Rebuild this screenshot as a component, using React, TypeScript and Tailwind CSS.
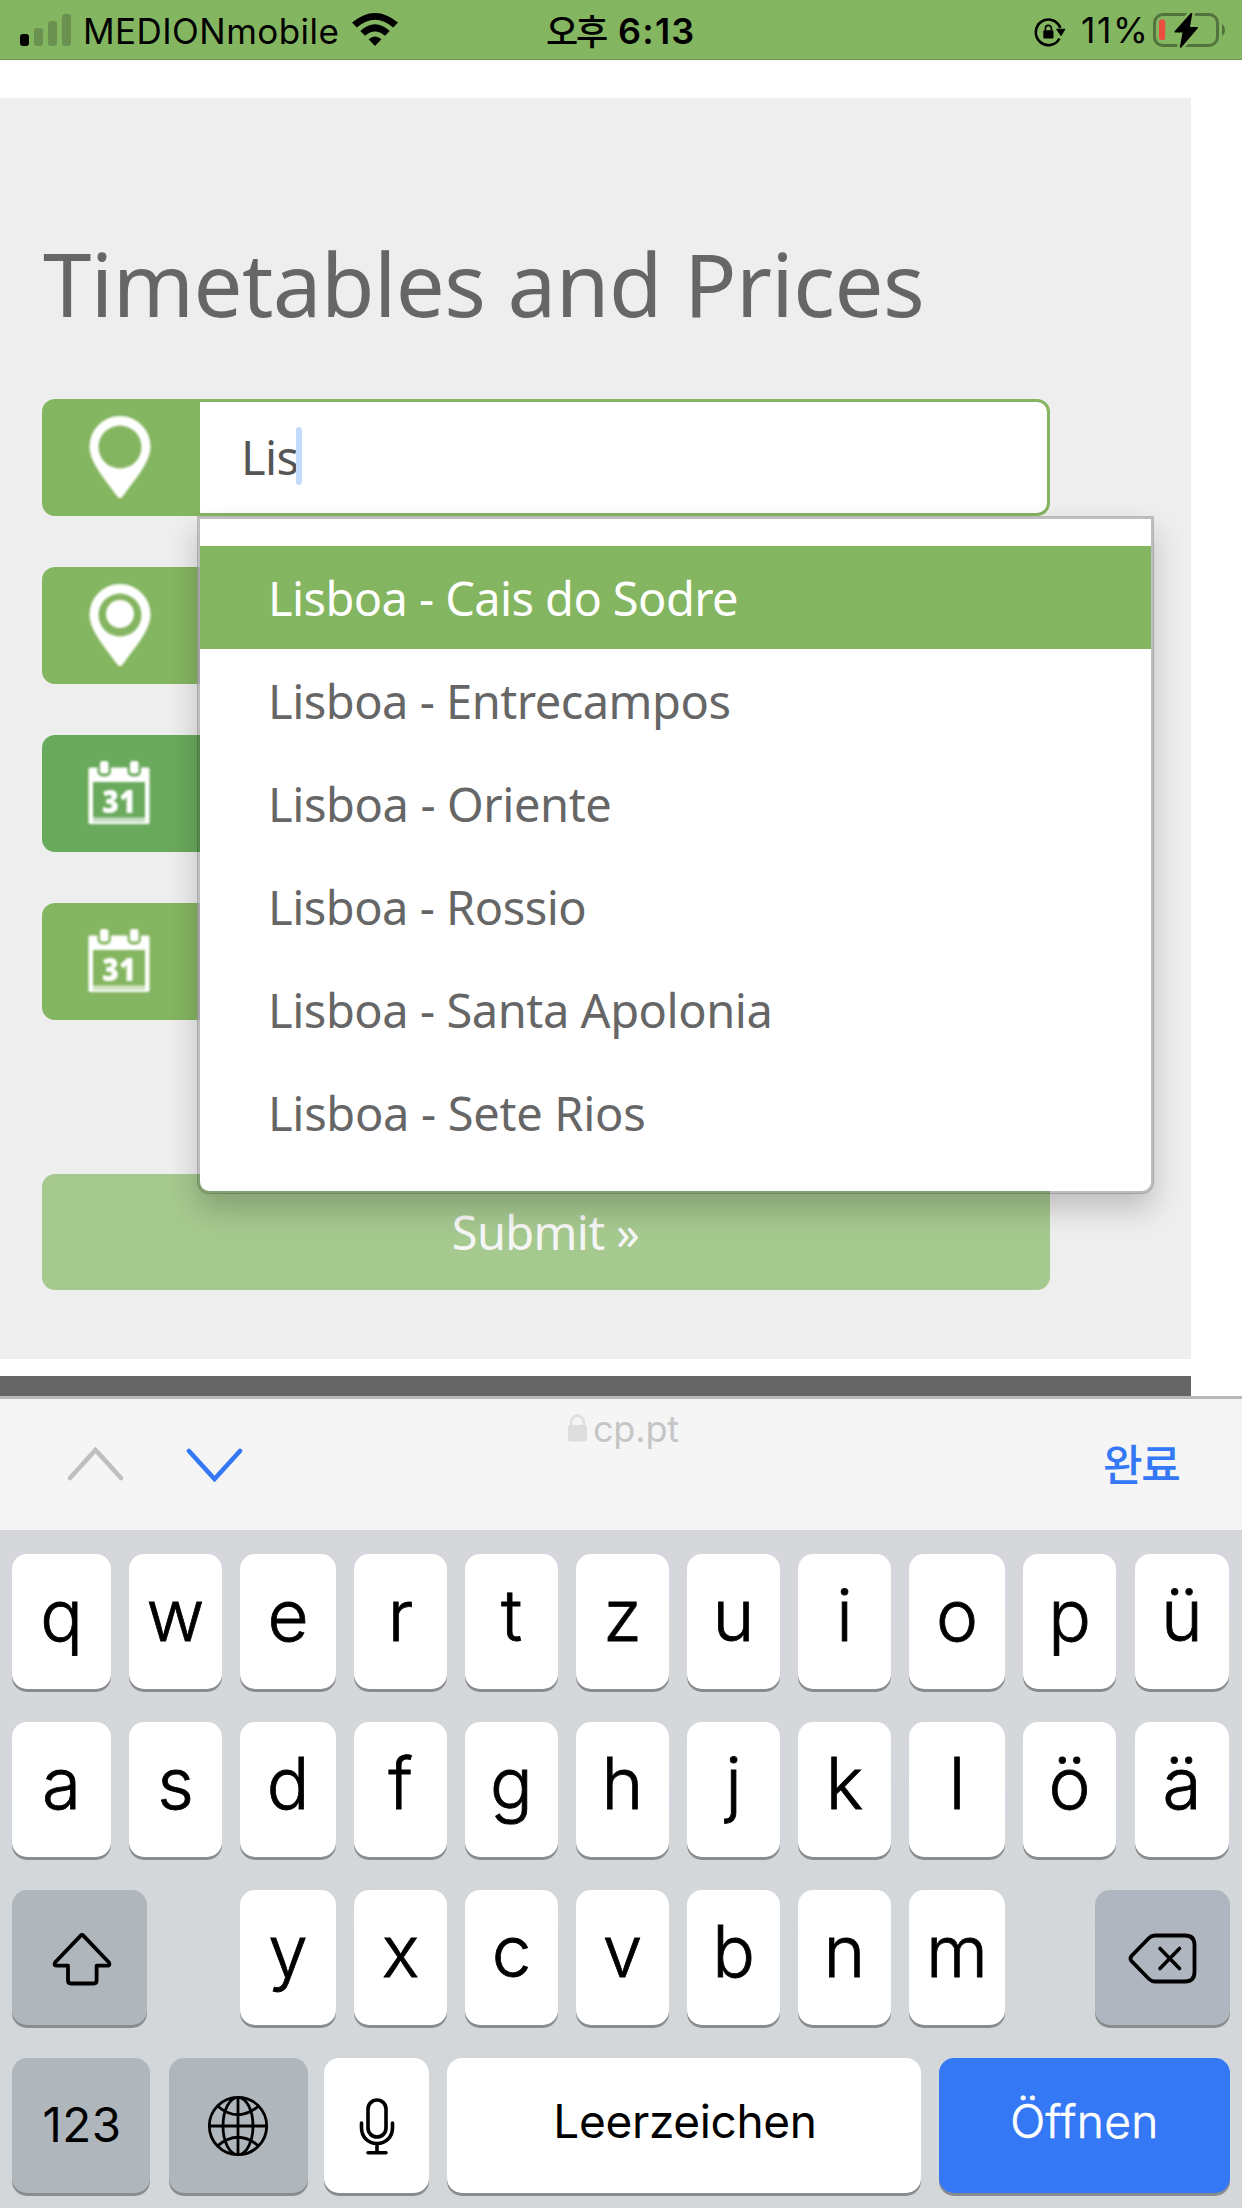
import type { ReactNode } from "react";

const STATIONS = [
  "Lisboa - Cais do Sodre",
  "Lisboa - Entrecampos",
  "Lisboa - Oriente",
  "Lisboa - Rossio",
  "Lisboa - Santa Apolonia",
  "Lisboa - Sete Rios",
];
const STATION_TRACKING = [
  "tracking-[-0.6px]",
  "tracking-[-0.5px]",
  "tracking-[-0.4px]",
  "tracking-[-0.5px]",
  "tracking-[-0.45px]",
  "tracking-[-0.3px]",
];

const WIDE = ["w-[99px]", "w-[93px]", "w-[96px]", "w-[93px]", "w-[93px]", "w-[93px]", "w-[93px]", "w-[93px]", "w-[96px]", "w-[93px]", "ml-px w-[94px]"];
const ROW_ONE = ["q", "w", "e", "r", "t", "z", "u", "i", "o", "p", "ü"];
const ROW_TWO = ["a", "s", "d", "f", "g", "h", "j", "k", "l", "ö", "ä"];
const ROW_THREE = ["y", "x", "c", "v", "b", "n", "m"];

function Key({ className, children }: { className: string; children: ReactNode }) {
  return (
    <div className={`flex h-[135px] shrink-0 items-center justify-center rounded-[15px] shadow-[0_3px_0_#898c8e] ${className}`}>
      {children}
    </div>
  );
}

function Letter({ char, width }: { char: string; width: string }) {
  return (
    <Key className={`bg-white pb-[12px] text-[71px] leading-none font-light [-webkit-text-stroke:0.8px_#000] ${width}`}>{char}</Key>
  );
}

function SignalBars() {
  return (
    <svg width="52" height="32" viewBox="0 0 52 32" className="shrink-0">
      <rect x="0" y="20" width="9" height="12" rx="3" fill="#000" />
      <rect x="14" y="14" width="9" height="18" rx="3" fill="#6a9150" />
      <rect x="28" y="7" width="9" height="25" rx="3" fill="#6a9150" />
      <rect x="42" y="0" width="9" height="32" rx="3" fill="#6a9150" />
    </svg>
  );
}

function Wifi() {
  return (
    <svg width="46" height="33" viewBox="0 0 46 33" className="shrink-0">
      <path d="M23 33 L16.6 26.2 Q23 20.6 29.4 26.2 Z" />
      <path d="M8.3 18 Q23 4.6 37.7 18 L33 22.8 Q23 14 13 22.8 Z" />
      <path d="M0 9.6 Q23 -9.6 46 9.6 L41.2 14.5 Q23 -0.9 4.8 14.5 Z" />
    </svg>
  );
}

function RotationLock() {
  return (
    <svg width="32" height="30" viewBox="0 0 32 30" className="shrink-0">
      <path d="M26.3 11 A12.6 12.8 0 1 0 25.5 21.5" fill="none" stroke="#000" strokeWidth="2.6" />
      <path d="M22.5 12.2 H31 L27 18.8 Z" stroke="#000" strokeWidth="0.8" strokeLinejoin="round" />
      <rect x="9.3" y="13.3" width="10.2" height="8.2" rx="1.2" />
      <path d="M11.4 13.5 V11.5 a3 3.2 0 0 1 6 0 V13.5" fill="none" stroke="#000" strokeWidth="1.7" />
    </svg>
  );
}

function Battery() {
  return (
    <svg width="74" height="36" viewBox="0 0 74 36" className="shrink-0">
      <rect x="1.5" y="1.5" width="63" height="31" rx="8.5" fill="none" stroke="#52733c" strokeWidth="3" />
      <path d="M69 11 a7.5 7.5 0 0 1 0 12 Z" fill="#52733c" />
      <rect x="6" y="6.5" width="6.2" height="20.5" rx="2.600" fill="#eb4e3d" />
      <path
        d="M38.500 0.500 L22.200 18.800 H30.500 L27.700 34 L44.200 14.800 H36 Z"
        fill="#000"
        stroke="#84b560"
        strokeWidth="7"
        paintOrder="stroke"
        strokeLinejoin="round"
      />
      <path d="M38.500 0.500 L22.200 18.800 H30.500 L27.700 34 L44.200 14.800 H36 Z" fill="#000" stroke="#000" strokeWidth="1.6" strokeLinejoin="round" />
    </svg>
  );
}

function Pin({ dot = false }: { dot?: boolean }) {
  return (
    <svg width="62" height="83" viewBox="0 0 62 83" className="blur-[0.8px]">
      <path
        fillRule="evenodd"
        fill="#fff"
        d="M31 0 A30.5 30.5 0 0 1 61.5 30.5 C61.5 46 47 62 34 80 Q31 84.500 28 80 C15 62 0.5 46 0.5 30.5 A30.5 30.5 0 0 1 31 0 Z M31 9.500 A21.500 21.500 0 1 0 31 52.500 A21.500 21.500 0 1 0 31 9.500 Z"
      />
      {dot && <circle cx="31" cy="30" r="14" fill="#fff" />}
    </svg>
  );
}

function CalendarIcon({ fill }: { fill: string }) {
  return (
    <svg width="62" height="66" viewBox="0 0 62 66" className="mr-[2px] mb-[2px] blur-[1px]">
      <rect x="0.5" y="7.5" width="61" height="56.500" rx="1.5" fill="#fff" />
      <rect x="9.500" y="0" width="13.500" height="16.500" rx="5" fill={fill} />
      <rect x="39.500" y="0" width="13.500" height="16.500" rx="5" fill={fill} />
      <rect x="12" y="1" width="8.500" height="12.500" rx="2.500" fill="#fff" />
      <rect x="42" y="1" width="8.500" height="12.500" rx="2.500" fill="#fff" />
      <rect x="5" y="22" width="52" height="35.500" fill={fill} />
      <rect x="5" y="57.500" width="52" height="4.500" fill={fill} opacity="0.4" />
      <text x="31" y="52.500" textAnchor="middle" fontFamily="Open Sans, sans-serif" fontSize="32" fontWeight="800" textLength="34" lengthAdjust="spacingAndGlyphs" fill="#fff">
        31
      </text>
    </svg>
  );
}

function FormRow({ icon, className, border }: { icon: ReactNode; className: string; border: string }) {
  return (
    <div className="flex h-[117px]">
      <div className={`flex w-[155px] shrink-0 items-center justify-center rounded-l-[13px] ${className}`}>{icon}</div>
      <div className={`flex-1 rounded-r-[13px] border-[3px] bg-white ${border}`} />
    </div>
  );
}

export default function App() {
  return (
    <div className="flex h-[2208px] w-[1242px] flex-col overflow-hidden bg-white font-['Inter','Noto_Sans_CJK_KR',sans-serif] text-black">
      <header className="flex h-[60px] shrink-0 items-start border-b border-[#6d9650] bg-[#84b560]">
        <div className="flex w-[546px] pl-5">
          <div className="pt-[14px]">
            <SignalBars />
          </div>
          <span className="w-[280px] shrink-0 pl-[11px] text-[35px] leading-[62px] tracking-[0.45px] whitespace-nowrap">MEDIONmobile</span>
          <div className="pt-[13px]">
            <Wifi />
          </div>
        </div>
        <div className="flex w-[488px] whitespace-nowrap">
          <span className="w-[72px] font-['Noto_Sans_CJK_KR',sans-serif] text-[35px] leading-[59px] font-medium tracking-[-2.2px]">오후</span>
          <span className="text-[36px] leading-[62px] font-semibold tracking-[1.2px]">6:13</span>
        </div>
        <div className="flex">
          <div className="pt-[17px]">
            <RotationLock />
          </div>
          <span className="w-[87px] pl-[15px] text-[35.5px] leading-[62px] tracking-[1.6px] whitespace-nowrap">11%</span>
          <div className="pt-[13px]">
            <Battery />
          </div>
        </div>
      </header>

      <main className="flex h-[1336px] shrink-0 flex-col items-start pt-[38px] font-['Noto_Sans',sans-serif]">
        <section className="h-[1261px] w-[1191px] bg-[#eeeeee] pt-[125px] pl-[42px]">
          <h1 className="pl-px text-[87px] leading-[120px] tracking-[-0.57px] whitespace-nowrap text-[#666666]">Timetables and Prices</h1>

          <div className="mt-[56px] flex w-[1008px] flex-col gap-[51px]">
            <div className="relative z-10 flex h-[117px]">
              <div className="flex w-[158px] shrink-0 items-center justify-center rounded-l-[13px] bg-[#84b560] pr-[3px]">
                <Pin />
              </div>
              <div className="flex flex-1 items-center rounded-r-[13px] border-[3px] border-l-0 border-[#84b560] bg-white pl-[41px] text-[47px] tracking-[-0.6px] text-[#555555]">
                Lis
                <span className="mb-[3px] -ml-[2px] h-[58px] w-[6px] rounded-full bg-[#c2dafb]" />
              </div>

              <ul className="absolute top-[117px] left-[155px] w-[957px] rounded-b-[12px] border-[3px] border-black/20 bg-white bg-clip-padding pt-[27px] pb-[27px] shadow-[0_15px_30px_rgba(0,0,0,0.2)]">
                {STATIONS.map((name, i) => (
                  <li
                    key={name}
                    className={`flex h-[103px] items-center pt-px pl-[68px] text-[47px] whitespace-nowrap ${STATION_TRACKING[i]} ${
                      i === 0 ? "bg-[#84b560] text-white" : "text-[#666666]"
                    }`}
                  >
                    {name}
                  </li>
                ))}
              </ul>
            </div>
            <FormRow icon={<Pin dot />} className="bg-[#84b560]" border="border-[#cccccc]" />
            <FormRow icon={<CalendarIcon fill="#6aaa5c" />} className="bg-[#6aaa5c]" border="border-[#6aaa5c]" />
            <FormRow icon={<CalendarIcon fill="#84b560" />} className="bg-[#84b560]" border="border-[#cccccc]" />
          </div>

          <div className="mt-[154px] flex h-[116px] w-[1008px] items-center justify-center rounded-[13px] bg-[#a6c98f] pt-px pr-px text-[47px] tracking-[-0.7px] text-[#f6f6f6]">
            Submit »
          </div>
        </section>
        <footer className="mt-[17px] h-[20px] w-[1191px] bg-[#666666]" />
      </main>

      <div className="flex h-[134px] shrink-0 items-start border-t-[3px] border-[#b8b8b8] bg-[#f5f5f5]">
        <div className="flex w-[568px] gap-[60px] pt-[46px] pl-[66px]">
          <svg width="59" height="37" viewBox="0 0 59 37">
            <path d="M4 33 L29.500 5 L55 33" fill="none" stroke="#bfbfbf" strokeWidth="4.600" strokeLinecap="round" />
          </svg>
          <svg width="59" height="37" viewBox="0 0 59 37">
            <path d="M4 6 L29.500 34 L55 6" fill="none" stroke="#3478f6" strokeWidth="4.600" strokeLinecap="round" />
          </svg>
        </div>
        <div className="flex w-[535px]">
          <svg width="19" height="28" viewBox="0 0 19 28" className="mt-[15px]">
            <rect x="0" y="11" width="19" height="16.500" rx="2.500" fill="#dedede" />
            <path d="M3 12 V8.500 a6.500 7 0 0 1 13 0 V12" fill="none" stroke="#dedede" strokeWidth="2.600" />
          </svg>
          <span className="pl-[6px] text-[36px] leading-[60px] tracking-[-0.2px] text-[#c5c5c5]">cp.pt</span>
        </div>
        <span className="pt-[33px] font-['Noto_Sans_CJK_KR',sans-serif] text-[43px] leading-[60px] font-medium tracking-[-1.2px] text-[#3478f6]">완료</span>
      </div>

      <div className="flex flex-1 flex-col gap-[33px] bg-linear-to-b from-[#d6d7dc] to-[#d3d7da] to-60% px-[12px] pt-[24px]">
        <div className="flex gap-[18px]">
          {ROW_ONE.map((c, i) => (
            <Letter key={c} char={c} width={WIDE[i]} />
          ))}
        </div>
        <div className="flex gap-[18px]">
          {ROW_TWO.map((c, i) => (
            <Letter key={c} char={c} width={WIDE[i]} />
          ))}
        </div>
        <div className="flex justify-between">
          <Key className="w-[135px] bg-[#afb7bd]">
            <svg width="60" height="54" viewBox="0 0 60 54" className="mt-[2px] ml-[4px]">
              <path
                d="M28.700 3.600 Q30 2.200 31.300 3.600 L57 30.500 Q58.600 33.700 55 33.700 H44.600 V48.500 Q44.600 51.500 41.600 51.500 H19 Q16 51.500 16 48.500 V33.700 H5 Q1.400 33.700 3 30.500 Z"
                fill="none"
                stroke="#000"
                strokeWidth="3.800"
                strokeLinejoin="round"
              />
            </svg>
          </Key>
          <div className="flex gap-[18px] pl-[3px]">
            {ROW_THREE.map((c, i) => (
              <Letter key={c} char={c} width={WIDE[i + 2]} />
            ))}
          </div>
          <Key className="w-[135px] bg-[#b0b6bf]">
            <svg width="70" height="52" viewBox="0 0 70 52" className="mt-[3px] ml-px">
              <path
                d="M27 2.500 H57 Q66.500 2.500 66.500 12 V39 Q66.500 48.500 57 48.500 H27 Q23.500 48.500 21 46 L3.500 28 Q1.500 25.500 3.500 23 L21 5 Q23.500 2.500 27 2.500 Z"
                fill="none"
                stroke="#000"
                strokeWidth="3.800"
              />
              <path d="M32 15.500 L51.500 35.500 M51.500 15.500 L32 35.500" stroke="#000" strokeWidth="3.600" strokeLinecap="round" />
            </svg>
          </Key>
        </div>
        <div className="flex">
          <Key className="w-[138px] bg-[#afb7bd] pl-[2px] pb-px text-[47.500px] leading-none tracking-[0.5px]">123</Key>
          <Key className="ml-[19px] w-[139px] bg-[#afb7bd]">
            <svg width="62" height="62" viewBox="0 0 62 62" fill="none" stroke="#000" strokeWidth="2.800" className="mr-px">
              <circle cx="31" cy="31" r="28.700" />
              <ellipse cx="31" cy="31" rx="15" ry="28.700" />
              <path d="M31 2.300 V59.700 M2.300 31 H59.700 M11 11.500 Q31 28 51 11.500 M11 50.500 Q31 34 51 50.500" />
            </svg>
          </Key>
          <Key className="ml-[16px] w-[105px] bg-white">
            <svg width="36" height="58" viewBox="0 0 36 58" fill="none" stroke="#000" strokeWidth="3.600" strokeLinecap="round" className="mt-px ml-px">
              <rect x="9" y="3" width="18" height="37" rx="9" />
              <path d="M2.500 26 V30.500 C2.500 40 9 46.500 18 46.500 S33.500 40 33.500 30.500 V26 M18 46.500 V55.500 M9 55.700 H27" />
            </svg>
          </Key>
          <Key className="ml-[18px] w-[474px] bg-white pb-[9px] pl-[2px] text-[46px] leading-none tracking-[-0.35px]">Leerzeichen</Key>
          <Key className="ml-[18px] w-[291px] bg-[#3478f6] pb-[9px] text-[46px] leading-none font-light tracking-[0.4px] text-white [-webkit-text-stroke:0.6px_#fff]">Öffnen</Key>
        </div>
      </div>
    </div>
  );
}
